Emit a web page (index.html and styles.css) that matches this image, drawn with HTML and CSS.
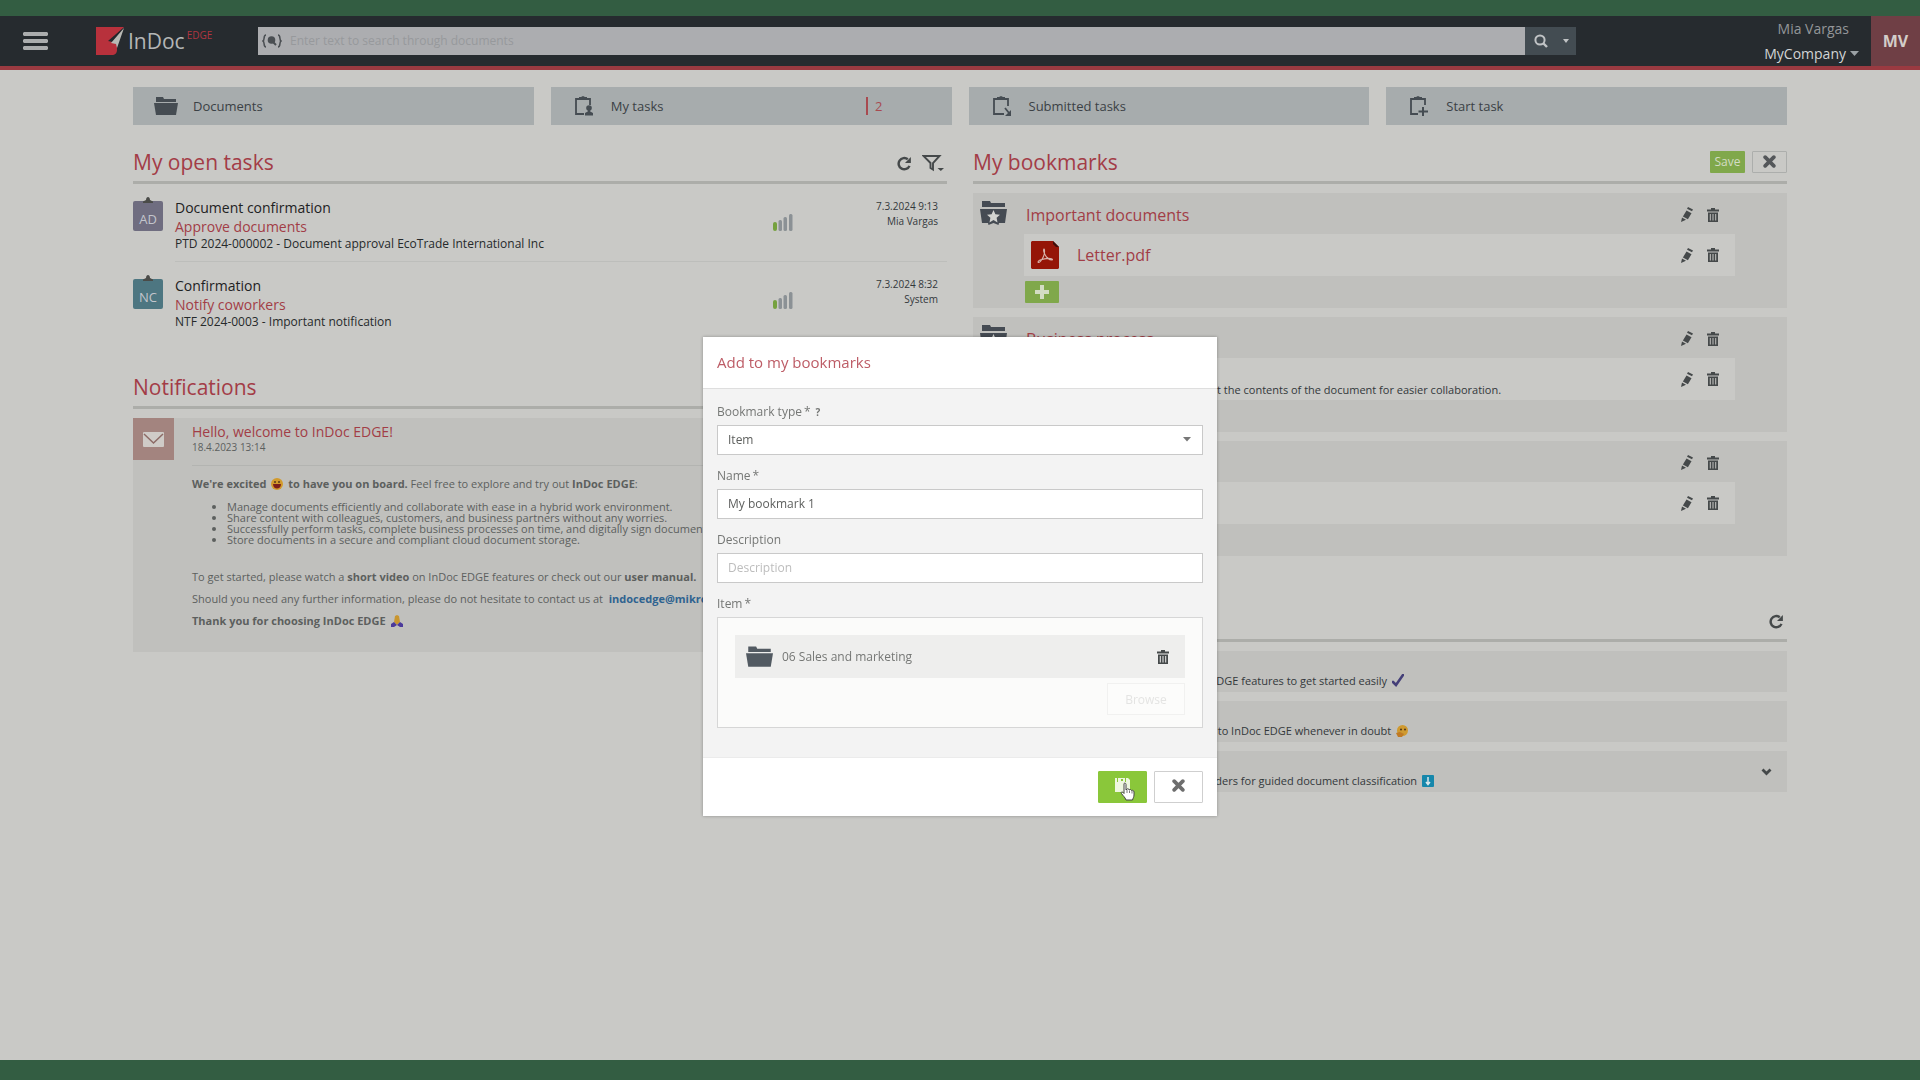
FILE: index.html
```html
<!DOCTYPE html>
<html lang="en">
<head>
    <meta charset="UTF-8">
    <meta name="viewport" content="width=device-width, initial-scale=1.0">
    <title>InDoc EDGE</title>
    <link rel="stylesheet" href="styles.css">
</head>
<body>
    <!-- Shared icons -->
    <svg class="sprite" aria-hidden="true">
        <symbol id="folder" viewBox="0 0 24 18">
            <path d="M2 0h7l1 2h12v3H2z"/>
            <path d="M0 6h24l-2 12H2z"/>
        </symbol>
        <symbol id="folder-star" viewBox="0 0 27 24">
            <path d="M2 0h8l1 2h14v4H2z"/>
            <path d="M0 8h27l-2 14h-6l-.5 2-5-2-5 2-.5-2H2z"/>
            <path class="star" d="M13.500 9l1.900 4.200 4.600.500-3.400 3.100.9 4.700-4-2.400-4 2.400.9-4.700L7 13.700l4.600-.5z"/>
        </symbol>
        <symbol id="pencil" viewBox="0 0 12 15">
            <path d="M7 0l5 2.500-1 1.700-5-2.500z"/>
            <path d="M5.500 3.500l5 2.700-3.600 6-5-2.700z"/>
            <path d="M1 10.500l4 2.300L0 15z"/>
        </symbol>
        <symbol id="trash" viewBox="0 0 12 14">
            <path d="M4 0h4v1.500h4v2H0v-2h4z"/>
            <path fill-rule="evenodd" d="M1 4.500h10V14H1zM2.800 6v6.500h1V6zM5.500 6v6.500h1V6zM8.200 6v6.500h1V6z"/>
        </symbol>
        <symbol id="refresh" viewBox="0 0 16 16">
            <path d="M13.300 10.500A6 6 0 1 1 11.500 3.500" fill="none" stroke="currentColor" stroke-width="2.600"/>
            <path d="M14.800 1v6.500H8.500z"/>
        </symbol>
        <symbol id="cross" viewBox="0 0 12 12">
            <path d="M2 2l8 8M10 2l-8 8" stroke="currentColor" stroke-width="3.400" stroke-linecap="round"/>
        </symbol>
        <symbol id="bars" viewBox="0 0 20 17">
            <rect class="on" x="0" y="8" width="4" height="9" rx="2"/>
            <rect x="5.500" y="6" width="3.500" height="11" rx="1.500"/>
            <rect x="10.500" y="3" width="3.500" height="14" rx="1.500"/>
            <rect x="16" y="0" width="3.500" height="17" rx="1.500"/>
        </symbol>
        <symbol id="clip" viewBox="0 0 10 6">
            <path d="M0 6V4.500L3 3c0-4 4-4 4 0l3 1.500V6z"/>
        </symbol>
    </svg>

    <header class="topbar">
        <button class="menu-btn" aria-label="Menu">
            <svg width="25" height="18" viewBox="0 0 25 18"><path d="M1 0h23l1 1v2l-1 1H1L0 3V1zM1 7h23l1 1v2l-1 1H1l-1-1V8zM1 14h23l1 1v2l-1 1H1l-1-1v-2z"/></svg>
        </button>
        <a class="logo" href="#">
            <svg width="28" height="28" viewBox="0 0 28 28">
                <path fill="#b8313c" d="M0 0h28L14 14l4 1 3 3v5c0 3-2 5-5 5H0z"/>
                <path fill="#22272b" d="M27 1L12 14l5 1z"/>
                <path fill="#b9bab5" d="M28 1L15 16l5 1 1 4z"/>
            </svg>
            <span class="logo-name">InDoc</span>
            <span class="logo-edge">EDGE</span>
        </a>
        <form class="search">
            <svg class="search-type" width="20" height="14" viewBox="0 0 20 14">
                <path d="M4 1C1 1 3 6 1 7c2 1 0 6 3 6M16 1c3 0 1 5 3 6-2 1 0 6-3 6" fill="none" stroke="currentColor" stroke-width="1.500"/>
                <circle cx="9.500" cy="6" r="3.800"/>
                <path d="M11 8l3 3" stroke="currentColor" stroke-width="2"/>
            </svg>
            <input type="text" aria-label="Search" placeholder="Enter text to search through documents">
            <button type="button" aria-label="Search">
                <svg width="14" height="14" viewBox="0 0 14 14"><circle cx="6" cy="6" r="4.600" fill="none" stroke="currentColor" stroke-width="2"/><path d="M9 9l4 4" stroke="currentColor" stroke-width="2.400"/></svg>
                <svg width="6" height="4" viewBox="0 0 6 4"><path d="M0 0h6L3 4z"/></svg>
            </button>
        </form>
        <div class="user">
            <span class="user-name">Mia Vargas</span>
            <button class="company">MyCompany <svg width="9" height="5" viewBox="0 0 9 5"><path d="M0 0h9L4.500 5z"/></svg></button>
        </div>
        <a class="avatar" href="#">MV</a>
    </header>

    <main class="page">
        <nav class="tiles">
            <a class="tile" href="#">
                <span class="tile-icon"><svg width="24" height="18"><use href="#folder"/></svg></span>
                Documents
            </a>
            <a class="tile" href="#">
                <span class="tile-icon">
                    <svg width="18" height="20" viewBox="0 0 18 20"><path d="M15 9V3H1v15h8" fill="none" stroke="currentColor" stroke-width="1.800"/><path d="M4 1h2l2-1 2 1h2v3H4z"/><circle cx="14" cy="12" r="2.800"/><path d="M12.800 13h2.400v2.500l2.800 1.500v2.500h-8V17l2.800-1.500z"/></svg>
                </span>
                My tasks
                <span class="tile-count">2</span>
            </a>
            <a class="tile" href="#">
                <span class="tile-icon">
                    <svg width="18" height="20" viewBox="0 0 18 20"><path d="M15 10V3H1v15h10" fill="none" stroke="currentColor" stroke-width="1.800"/><path d="M4 1h2l2-1 2 1h2v3H4z"/><path d="M12 12l4 5" stroke="currentColor" stroke-width="1.800"/><path d="M18 14v6h-6z"/></svg>
                </span>
                Submitted tasks
            </a>
            <a class="tile" href="#">
                <span class="tile-icon">
                    <svg width="18" height="20" viewBox="0 0 18 20"><path d="M15 9V3H1v15h7" fill="none" stroke="currentColor" stroke-width="1.800"/><path d="M4 1h2l2-1 2 1h2v3H4z"/><path d="M13 11v9M8.500 15.500H18" stroke="currentColor" stroke-width="2"/></svg>
                </span>
                Start task
            </a>
        </nav>

        <div class="columns">
            <div class="column">
                <section>
                    <div class="section-head">
                        <h2>My open tasks</h2>
                        <div class="head-tools">
                            <button class="icon-btn" aria-label="Refresh"><svg width="15" height="15"><use href="#refresh"/></svg></button>
                            <button class="icon-btn" aria-label="Filter"><svg width="22" height="17" viewBox="0 0 22 17"><path d="M1.500 1h16L11 8v6.500L8.500 13V8z" fill="none" stroke="currentColor" stroke-width="1.900"/><path d="M15.500 13H22l-3.200 3z"/></svg></button>
                        </div>
                    </div>
                    <article class="task">
                        <div class="task-badge badge-ad">AD<svg class="clip" width="10" height="6"><use href="#clip"/></svg></div>
                        <div class="task-body">
                            <div class="task-text">
                                <h3>Document confirmation</h3>
                                <a href="#">Approve documents</a>
                                <p>PTD 2024-000002 - Document approval EcoTrade International Inc</p>
                            </div>
                            <svg class="bars" width="20" height="17"><use href="#bars"/></svg>
                            <div class="task-meta">7.3.2024 9:13<br>Mia Vargas</div>
                        </div>
                    </article>
                    <article class="task">
                        <div class="task-badge badge-nc">NC<svg class="clip" width="10" height="6"><use href="#clip"/></svg></div>
                        <div class="task-body">
                            <div class="task-text">
                                <h3>Confirmation</h3>
                                <a href="#">Notify coworkers</a>
                                <p>NTF 2024-0003 - Important notification</p>
                            </div>
                            <svg class="bars" width="20" height="17"><use href="#bars"/></svg>
                            <div class="task-meta">7.3.2024 8:32<br>System</div>
                        </div>
                    </article>
                </section>

                <section class="notifications">
                    <div class="section-head">
                        <h2>Notifications</h2>
                    </div>
                    <article class="notice">
                        <div class="notice-icon">
                            <svg width="21" height="15" viewBox="0 0 21 15"><rect width="21" height="15" rx="1" fill="#cfcbc7"/><path d="M1 2l9.500 9L20 2" fill="none" stroke="#8d6b66" stroke-width="1.500"/></svg>
                        </div>
                        <div class="notice-body">
                            <div class="notice-head">
                                <a href="#">Hello, welcome to InDoc EDGE!</a>
                                <time>18.4.2023 13:14</time>
                            </div>
                            <p><b>We're excited <svg class="emoji" width="12" height="12" viewBox="0 0 12 12"><circle cx="6" cy="6" r="6" fill="#d29a2c"/><path d="M2 6h8c0 6-8 6-8 0z" fill="#7c1f1a"/><circle cx="4" cy="4" r="1" fill="#54381b"/><circle cx="8" cy="4" r="1" fill="#54381b"/></svg> to have you on board.</b> Feel free to explore and try out <b>InDoc EDGE</b>:</p>
                            <ul>
                                <li>Manage documents efficiently and collaborate with ease in a hybrid work environment.</li>
                                <li>Share content with colleagues, customers, and business partners without any worries.</li>
                                <li>Successfully perform tasks, complete business processes on time, and digitally sign documents.</li>
                                <li>Store documents in a secure and compliant cloud document storage.</li>
                            </ul>
                            <p>To get started, please watch a <b>short video</b> on InDoc EDGE features or check out our <b>user manual.</b></p>
                            <p>Should you need any further information, please do not hesitate to contact us at &nbsp;<a href="#">indocedge@mikrocop.com</a></p>
                            <p><b>Thank you for choosing InDoc EDGE <svg class="emoji" width="12" height="12" viewBox="0 0 12 12"><path d="M6 0l2 1 1 6-3 3-3-3 1-6z" fill="#c9962f"/><path d="M3 7l3 3-3 2H0V9zM9 7l-3 3 3 2h3V9z" fill="#4b3a9b"/></svg></b></p>
                        </div>
                    </article>
                </section>
            </div>

            <div class="column">
                <section>
                    <div class="section-head">
                        <h2>My bookmarks</h2>
                        <div class="head-buttons">
                            <button class="save-btn">Save</button>
                            <button class="close-btn" aria-label="Close"><svg width="13" height="13"><use href="#cross"/></svg></button>
                        </div>
                    </div>
                    <div class="groups">
                        <article class="group">
                            <svg class="group-icon" width="27" height="24"><use href="#folder-star"/></svg>
                            <div class="group-body">
                                <div class="group-head">
                                    <a href="#">Important documents</a>
                                    <div class="actions">
                                        <button class="icon-btn" aria-label="Edit"><svg width="12" height="15"><use href="#pencil"/></svg></button>
                                        <button class="icon-btn" aria-label="Delete"><svg width="12" height="14"><use href="#trash"/></svg></button>
                                    </div>
                                </div>
                                <div class="bookmark">
                                    <svg width="28" height="28" viewBox="0 0 28 28"><path fill="#951507" d="M1 0h21l6 6v21l-1 1H1l-1-1V1z"/><path fill="#3c0f0a" d="M22 0l6 6h-3l-3-3z"/><path fill="none" stroke="#d8b2aa" stroke-width="1.100" d="M7 21c2 2 7-6 6.500-11.500 0-3-2-1 0 3C15 16 18 19 21 19c2-1-3-3-12 0-2 1-2 1.500-2 2z"/></svg>
                                    <div class="bookmark-text"><a href="#">Letter.pdf</a></div>
                                    <div class="actions">
                                        <button class="icon-btn" aria-label="Edit"><svg width="12" height="15"><use href="#pencil"/></svg></button>
                                        <button class="icon-btn" aria-label="Delete"><svg width="12" height="14"><use href="#trash"/></svg></button>
                                    </div>
                                </div>
                                <button class="add-btn" aria-label="Add bookmark"><svg width="14" height="14" viewBox="0 0 14 14"><path d="M5 0h4v5h5v4H9v5H5V9H0V5h5z"/></svg></button>
                            </div>
                        </article>
                        <article class="group">
                            <svg class="group-icon" width="27" height="24"><use href="#folder-star"/></svg>
                            <div class="group-body">
                                <div class="group-head">
                                    <a href="#">Business process</a>
                                    <div class="actions">
                                        <button class="icon-btn" aria-label="Edit"><svg width="12" height="15"><use href="#pencil"/></svg></button>
                                        <button class="icon-btn" aria-label="Delete"><svg width="12" height="14"><use href="#trash"/></svg></button>
                                    </div>
                                </div>
                                <div class="bookmark">
                                    <svg width="28" height="21"><use href="#folder"/></svg>
                                    <div class="bookmark-text">
                                        <a href="#">Approval</a>
                                        <p>Write your comments about the contents of the document for easier collaboration.</p>
                                    </div>
                                    <div class="actions">
                                        <button class="icon-btn" aria-label="Edit"><svg width="12" height="15"><use href="#pencil"/></svg></button>
                                        <button class="icon-btn" aria-label="Delete"><svg width="12" height="14"><use href="#trash"/></svg></button>
                                    </div>
                                </div>
                            </div>
                        </article>
                        <article class="group">
                            <svg class="group-icon" width="27" height="24"><use href="#folder-star"/></svg>
                            <div class="group-body">
                                <div class="group-head">
                                    <a href="#">Folders</a>
                                    <div class="actions">
                                        <button class="icon-btn" aria-label="Edit"><svg width="12" height="15"><use href="#pencil"/></svg></button>
                                        <button class="icon-btn" aria-label="Delete"><svg width="12" height="14"><use href="#trash"/></svg></button>
                                    </div>
                                </div>
                                <div class="bookmark">
                                    <svg width="28" height="21"><use href="#folder"/></svg>
                                    <div class="bookmark-text"><a href="#">Contracts</a></div>
                                    <div class="actions">
                                        <button class="icon-btn" aria-label="Edit"><svg width="12" height="15"><use href="#pencil"/></svg></button>
                                        <button class="icon-btn" aria-label="Delete"><svg width="12" height="14"><use href="#trash"/></svg></button>
                                    </div>
                                </div>
                            </div>
                        </article>
                    </div>
                </section>

                <section class="guides">
                    <div class="section-head">
                        <h2>Instructions</h2>
                        <div class="head-tools">
                            <button class="icon-btn" aria-label="Refresh"><svg width="15" height="15"><use href="#refresh"/></svg></button>
                        </div>
                    </div>
                    <article class="guide">
                        <div>
                            <a href="#">Getting started</a>
                            <p>Check out the basic set of the InDoc EDGE features to get started easily <svg class="emoji" width="12" height="13" viewBox="0 0 12 13"><path d="M1 8l3 3L11 1" fill="none" stroke="#443f78" stroke-width="2.600" stroke-linecap="round"/></svg></p>
                        </div>
                    </article>
                    <article class="guide">
                        <div>
                            <a href="#">User manual</a>
                            <p>Take a look at the helpful user guides to InDoc EDGE whenever in doubt <svg class="emoji" width="12" height="12" viewBox="0 0 12 12"><circle cx="6.500" cy="5.500" r="5.500" fill="#cf9a30"/><path d="M0 8l4-1 4 2-2 3H2z" fill="#c07a24"/><circle cx="5" cy="4.500" r="1" fill="#4c3418"/><circle cx="9" cy="4.500" r="1" fill="#4c3418"/></svg></p>
                        </div>
                    </article>
                    <article class="guide">
                        <div>
                            <a href="#">Folder structure</a>
                            <p>Use a structure of digital company folders for guided document classification <svg class="emoji" width="12" height="12" viewBox="0 0 12 12"><rect width="12" height="12" rx="1" fill="#1687ab"/><path d="M6 2v7M4 7l2 2.500L8 7" fill="none" stroke="#dce8ec" stroke-width="1.500"/></svg></p>
                        </div>
                        <button class="icon-btn" aria-label="Expand"><svg width="11" height="8" viewBox="0 0 11 8"><path d="M1.500 1.500l4 4 4-4" fill="none" stroke="currentColor" stroke-width="2.800"/></svg></button>
                    </article>
                </section>
            </div>
        </div>
    </main>

    <div class="overlay">
        <form class="modal" role="dialog" aria-labelledby="modalTitle">
            <div class="modal-head"><h2 id="modalTitle">Add to my bookmarks</h2></div>
            <div class="modal-body">
                <div class="field">
                    <label for="bookmarkType">Bookmark type<span class="req">*</span><span class="help">?</span></label>
                    <div class="select-box">
                        <select id="bookmarkType"><option>Item</option></select>
                        <svg width="8" height="5" viewBox="0 0 8 5"><path d="M0 0h8L4 4.500z"/></svg>
                    </div>
                </div>
                <div class="field">
                    <label for="bookmarkName">Name<span class="req">*</span></label>
                    <input type="text" id="bookmarkName" value="My bookmark 1">
                </div>
                <div class="field">
                    <label for="bookmarkDescription">Description</label>
                    <input type="text" id="bookmarkDescription" placeholder="Description">
                </div>
                <div class="field">
                    <label for="browseBtn">Item<span class="req">*</span></label>
                    <div class="item-box">
                        <div class="item-row">
                            <svg width="27" height="21"><use href="#folder"/></svg>
                            <span>06 Sales and marketing</span>
                            <button type="button" class="icon-btn" aria-label="Remove"><svg width="12" height="14"><use href="#trash"/></svg></button>
                        </div>
                        <button type="button" class="browse-btn" id="browseBtn" disabled>Browse</button>
                    </div>
                </div>
            </div>
            <div class="modal-foot">
                <button type="button" class="confirm-btn" aria-label="Save">
                    <svg width="15" height="14" viewBox="0 0 15 14"><path fill-rule="evenodd" d="M0 0h2v4h1V0h7v4h1V0h2l2 2v12H0zM6 1v2h2V1z"/></svg>
                    <svg class="cursor" width="15" height="19" viewBox="0 0 15 19"><path d="M4 1.500c1-1 2 0 2 1V8l1-1c1-.5 2 0 2 1 1-1 2-.5 2.500.5 1-.5 2.500 0 2.500 1.500v3c0 2-1 3-1.500 5H6c-1-3-3-4-4.500-6.500C.500 10 2 9.500 3 10.500l1 1z" fill="#fff" stroke="#444" stroke-width="1"/><path d="M7 8v3M9.500 8.500V11M12 9v2.500" stroke="#444" stroke-width=".7"/></svg>
                </button>
                <button type="button" class="cancel-btn" aria-label="Cancel"><svg width="13" height="13"><use href="#cross"/></svg></button>
            </div>
        </form>
    </div>
</body>
</html>
```
FILE: styles.css
```css
* {
    box-sizing: border-box;
}

body {
    margin: 0;
    min-height: 100vh;
    border-top: 16px solid #335d42;
    border-bottom: 20px solid #335d42;
    background-color: #c9c9c6;
    color: #33383b;
    font-family: "Open Sans", "Noto Sans", sans-serif;
    font-size: 12px;
}

h2, h3, p {
    margin: 0;
    font-weight: normal;
}

a {
    color: #a23d46;
    text-decoration: none;
}

button, input, select {
    font-family: inherit;
    font-size: inherit;
    margin: 0;
}

button {
    cursor: pointer;
}

svg {
    display: block;
    fill: currentColor;
}

.sprite {
    position: absolute;
    width: 0;
    height: 0;
}

.icon-btn {
    padding: 0;
    border: none;
    background: none;
    color: #45494a;
}

/* Top bar */

.topbar {
    display: flex;
    align-items: center;
    height: 54px;
    border-bottom: 4px solid #9a3a41;
    background-color: #262b2f;
}

.menu-btn {
    padding: 0;
    margin: 0 48px 0 23px;
    border: none;
    background: none;
    color: #abadae;
}

.logo {
    display: flex;
    align-items: center;
    width: 162px;
}

.logo-name {
    margin-left: 4px;
    color: #b4b6b6;
    font-size: 21px;
}

.logo-edge {
    margin: 0 0 12px 2px;
    color: #b03540;
    font-size: 10px;
}

.search {
    display: flex;
    flex: 1;
    align-items: center;
    height: 28px;
    background-color: #acadb0;
}

.search-type {
    margin-left: 4px;
    color: #4a4e52;
}

.search input {
    flex: 1;
    height: 28px;
    padding: 0 8px 2px;
    border: none;
    background: none;
    font-size: 12px;
}

.search input::placeholder {
    color: #97999c;
}

.search button {
    display: flex;
    align-items: center;
    gap: 15px;
    height: 28px;
    padding: 0 7px 0 9px;
    border: none;
    background-color: #434c52;
    color: #c0c3c5;
}

.user {
    display: flex;
    flex-direction: column;
    align-items: flex-end;
    width: 295px;
    padding-right: 12px;
    line-height: 25px;
}

.user-name {
    margin-right: 10px;
    color: #939699;
    font-size: 14px;
}

.company {
    display: flex;
    align-items: center;
    gap: 4px;
    padding: 0;
    border: none;
    background: none;
    color: #d2d4d5;
    font-size: 14px;
    line-height: 25px;
}

.company svg {
    color: #9ba1a5;
}

.avatar {
    display: flex;
    align-items: center;
    justify-content: center;
    width: 49px;
    height: 50px;
    background-color: #6f3f45;
    color: #d3cdc9;
    font-size: 16px;
    font-weight: bold;
}

/* Page */

.page {
    padding: 17px 133px 0;
}

.tiles {
    display: grid;
    grid-template-columns: repeat(4, 1fr);
    gap: 17px;
}

.tile {
    display: flex;
    align-items: center;
    height: 38px;
    padding-left: 21px;
    background-color: #a7acad;
    color: #3b4145;
    font-size: 13px;
}

.tile-icon {
    display: flex;
    justify-content: center;
    width: 24px;
    margin-right: 15px;
    color: #454c52;
}

.tile-count {
    margin: 0 69px 0 auto;
    padding-left: 7px;
    border-left: 2px solid #a84a50;
    color: #a84a50;
}

.columns {
    display: grid;
    grid-template-columns: 1fr 1fr;
    gap: 26px;
    margin-top: 13px;
}

.column {
    min-width: 0;
}

.section-head {
    display: flex;
    align-items: center;
    justify-content: space-between;
    height: 46px;
    padding-top: 4px;
    border-bottom: 3px solid #acada9;
}

.section-head h2 {
    color: #a33c47;
    font-size: 21px;
}

.head-tools {
    display: flex;
    align-items: center;
    gap: 10px;
    padding: 3px 3px 0 0;
}

.head-buttons {
    display: flex;
    gap: 7px;
}

.save-btn, .close-btn {
    display: flex;
    align-items: center;
    justify-content: center;
    width: 35px;
    height: 22px;
    padding: 0;
    border: none;
    border-radius: 1px;
    background-color: #80a84b;
    color: #d3dcc4;
}

.close-btn {
    border: 1px solid #acaeac;
    background: none;
    color: #54575a;
}

/* Tasks */

.task {
    display: flex;
    height: 78px;
    padding-top: 14px;
}

.task-badge {
    position: relative;
    width: 30px;
    height: 30px;
    margin: 3px 12px 0 0;
    border-radius: 2px;
    background-color: #6f6d80;
    color: #c3c5cc;
    font-size: 13px;
    line-height: 36px;
    text-align: center;
}

.badge-nc {
    background-color: #4d7681;
}

.clip {
    position: absolute;
    top: -4px;
    left: 10px;
    color: #4a4b48;
}

.task-body {
    display: flex;
    flex: 1;
    padding-right: 9px;
    border-bottom: 1px solid #bdbebb;
}

.task:last-child .task-body {
    border-bottom: none;
}

.task-text {
    flex: 1;
}

.task h3 {
    color: #1e2223;
    font-size: 14px;
    line-height: 20px;
}

.task a {
    display: block;
    font-size: 14px;
    line-height: 18px;
}

.task p {
    color: #262a2b;
    line-height: 15px;
}

.bars {
    margin-top: 16px;
    color: #8b9195;
}

.task-meta {
    width: 145px;
    padding-top: 1px;
    font-size: 10px;
    line-height: 15px;
    text-align: right;
}

.on {
    fill: #75a13e;
}

/* Notifications */

.notifications {
    margin-top: 23px;
}

.notice {
    display: flex;
    margin-top: 9px;
    background-color: #c0c0bd;
}

.notice-icon {
    display: flex;
    align-items: center;
    justify-content: center;
    width: 41px;
    height: 42px;
    background-color: #a3847f;
}

.notice-body {
    flex: 1;
    padding: 4px 18px 15px;
    color: #5c5f5e;
    font-size: 11px;
    line-height: 11px;
}

.notice-head {
    margin-bottom: 12px;
    padding-bottom: 12px;
    border-bottom: 1px solid #b3b4b1;
}

.notice-head a {
    display: block;
    font-size: 14px;
    line-height: 19px;
}

.notice-head time {
    display: block;
    font-size: 10px;
    line-height: 12px;
}

.notice p {
    margin-bottom: 11px;
}

.notice p a {
    color: #2f6390;
    font-weight: bold;
}

.notice ul {
    margin: 12px 0 26px;
    padding-left: 35px;
}

.emoji {
    display: inline-block;
    margin: -3px 2px -2px;
    vertical-align: baseline;
}

/* Bookmarks */

.groups {
    display: flex;
    flex-direction: column;
    gap: 9px;
    margin-top: 9px;
}

.group {
    display: flex;
    align-items: flex-start;
    height: 115px;
    padding-right: 52px;
    background-color: #c0c0bd;
}

.group-icon {
    margin: 8px 17px 0 7px;
    color: #454b53;
}

.star {
    fill: #d2d3d0;
}

.group-body {
    flex: 1;
}

.group-head {
    display: flex;
    align-items: center;
    justify-content: space-between;
    height: 41px;
    padding: 2px 16px 0 2px;
    font-size: 16px;
}

.actions {
    display: flex;
    align-items: center;
    gap: 14px;
}

.bookmark {
    display: flex;
    align-items: center;
    height: 42px;
    padding: 0 16px 0 7px;
    background-color: #c9c9c6;
    color: #454b53;
}

.bookmark-text {
    flex: 1;
    margin-left: 18px;
}

.bookmark-text a {
    font-size: 16px;
}

.bookmark-text p {
    color: #33383b;
    font-size: 11px;
    line-height: 14px;
}

.add-btn {
    display: flex;
    align-items: center;
    justify-content: center;
    width: 34px;
    height: 22px;
    margin: 5px 0 0 1px;
    padding: 0;
    border: none;
    border-radius: 1px;
    background-color: #80a84b;
    color: #d3dcc4;
}

/* Instructions */

.guides {
    margin-top: 40px;
}

.guide {
    display: flex;
    align-items: center;
    justify-content: space-between;
    height: 41px;
    margin-top: 9px;
    padding: 0 15px 0 51px;
    background-color: #c0c0bd;
    color: #33383b;
}

.guide a {
    font-size: 14px;
    line-height: 18px;
}

.guide p {
    font-size: 11px;
    line-height: 16px;
}

/* Dialog */

.overlay {
    position: fixed;
    inset: 0;
    display: flex;
    align-items: flex-start;
    justify-content: center;
    padding-top: 337px;
}

.modal {
    width: 514px;
    max-width: 100%;
    background-color: #f3f3f3;
    box-shadow: 0 0 3px rgba(0, 0, 0, 0.3);
    color: #757775;
}

.modal-head {
    display: flex;
    align-items: center;
    height: 52px;
    padding: 0 14px 2px;
    border-bottom: 1px solid #dedede;
    background-color: #fff;
}

.modal-head h2 {
    color: #bd5c66;
    font-size: 15px;
}

.modal-body {
    padding: 14px 14px 29px;
}

.field {
    margin-bottom: 12px;
}

.field:last-child {
    margin-bottom: 0;
}

.field label {
    display: block;
    margin-bottom: 4px;
    line-height: 18px;
}

.req {
    margin-left: 2px;
}

.help {
    margin-left: 5px;
    font-size: 10px;
    font-weight: bold;
}

.field input, .field select {
    display: block;
    width: 100%;
    height: 30px;
    padding: 0 10px 2px;
    border: 1px solid #c9c9c9;
    border-radius: 0;
    background-color: #fff;
    color: #5d5f5d;
    appearance: none;
}

.field input::placeholder {
    color: #bdbdbd;
}

.select-box {
    position: relative;
}

.select-box svg {
    position: absolute;
    top: 12px;
    right: 12px;
    color: #777;
    pointer-events: none;
}

.item-box {
    padding: 17px 17px 12px;
    border: 1px solid #d6d6d6;
    background-color: #fbfbfa;
}

.item-row {
    display: flex;
    align-items: center;
    gap: 9px;
    height: 43px;
    margin-bottom: 5px;
    padding: 0 16px 0 11px;
    background-color: #eeeeed;
}

.item-row > svg {
    color: #525a62;
}

.item-row span {
    flex: 1;
}

.browse-btn {
    display: block;
    width: 78px;
    height: 32px;
    margin-left: auto;
    border: 1px solid #f1f1f0;
    background-color: #fcfcfb;
    color: #e4e4e3;
}

.modal-foot {
    display: flex;
    justify-content: flex-end;
    gap: 7px;
    padding: 13px 14px;
    border-top: 1px solid #ebebeb;
    background-color: #fff;
}

.confirm-btn, .cancel-btn {
    position: relative;
    display: flex;
    align-items: center;
    justify-content: center;
    width: 49px;
    height: 32px;
    padding: 0 0 4px;
    border: 1px solid #8ac73a;
    border-radius: 1px;
    background-color: #8ac73a;
    color: #eef7e0;
}

.cancel-btn {
    border-color: #cfcfcf;
    background-color: #fff;
    color: #6d6d6d;
}

.cursor {
    position: absolute;
    top: 10px;
    left: 21px;
}
```
